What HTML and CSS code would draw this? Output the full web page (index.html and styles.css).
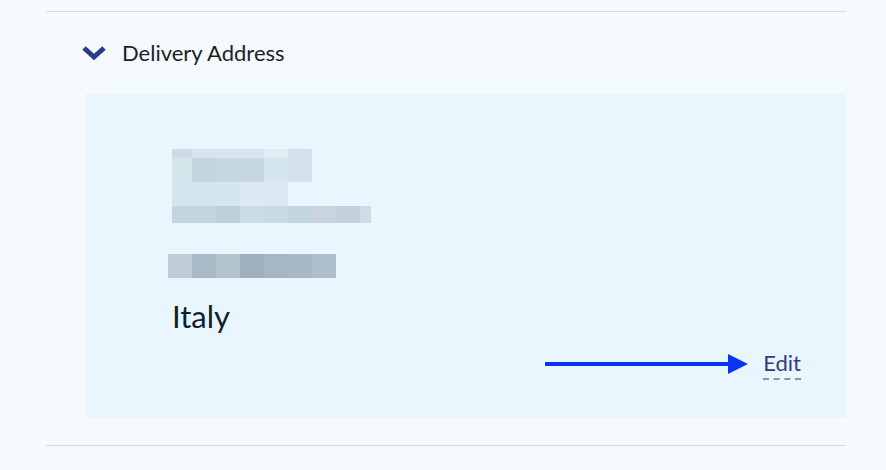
FILE: index.html
```html
<!DOCTYPE html>
<html>
<head>
<meta charset="utf-8">
<link rel="stylesheet" href="styles.css">
</head>
<body>
<div class="section">
  <div class="header">
    <svg class="chev" width="24" height="16" viewBox="0 0 24 16"><path d="M2 3 L12 12 L22 3" fill="none" stroke="#2b3a8c" stroke-width="5" stroke-linejoin="miter"/></svg>
    <span class="title">Delivery Address</span>
  </div>
  <div class="box">
    <div class="mosaic m1">
      <div class="row r1">
        <i style="width:20px;background:#cddde5"></i><i style="width:24px;background:#d6e6ee"></i><i style="width:24px;background:#d6e6ee"></i><i style="width:24px;background:#d6e6ee"></i><i style="width:24px;background:#dfeef5"></i><i style="width:24px;background:#d2e1ea"></i>
      </div>
      <div class="row r2">
        <i style="width:20px;background:#d5e5ec"></i><i style="width:24px;background:#c3d5de"></i><i style="width:24px;background:#c8d8e1"></i><i style="width:24px;background:#c8d8e1"></i><i style="width:24px;background:#d6e6ee"></i><i style="width:24px;background:#d2e1ea"></i>
      </div>
      <div class="row r3">
        <i style="width:68px;background:#d5e6ee"></i><i style="width:48px;background:#dde9f2"></i>
      </div>
      <div class="row r4">
        <i style="width:44px;background:#c3d5df"></i><i style="width:24px;background:#bfcfd9"></i><i style="width:24px;background:#cbdce5"></i><i style="width:24px;background:#c9dae3"></i><i style="width:24px;background:#c2d4de"></i><i style="width:24px;background:#c8d5df"></i><i style="width:24px;background:#c3d1dc"></i><i style="width:11px;background:#cfdde7"></i>
      </div>
    </div>
    <div class="mosaic m2">
      <div class="row r5">
        <i style="width:24px;background:#bfcdd6"></i><i style="width:24px;background:#a9b9c5"></i><i style="width:24px;background:#b3c4cd"></i><i style="width:24px;background:#9fb0bc"></i><i style="width:24px;background:#a6b7c3"></i><i style="width:24px;background:#a9b8c5"></i><i style="width:24px;background:#adbfca"></i>
      </div>
    </div>
    <div class="country">Italy</div>
    <div class="actions">
      <svg class="arrow" width="203" height="22" viewBox="0 0 203 22"><line x1="0" y1="11" x2="186" y2="11" stroke="#0a34f5" stroke-width="4"/><path d="M183 1 L203 11 L183 21 Z" fill="#0a34f5"/></svg>
      <a class="edit">Edit</a>
    </div>
  </div>
  <div class="spacer"></div>
</div>
</body>
</html>
```
FILE: styles.css
```css
html, body {
  margin: 0;
  padding: 0;
  background: #f5fafe;
  font-family: Lato, "Open Sans", sans-serif;
}
.section {
  margin: 11px 40px 0 46px;
  border-top: 1px solid #d6dde3;
  border-bottom: 1px solid #d3dbe1;
}
.header {
  height: 81px;
  display: flex;
  align-items: center;
  padding-left: 36px;
}
.chev {
  display: block;
  margin-right: 16px;
  margin-top: 1px;
}
.title {
  font-size: 22px;
  color: #1a1f2b;
  line-height: 27px;
}
.box {
  margin-left: 40px;
  height: 325px;
  box-sizing: border-box;
  background: #eaf6fd;
  padding: 56px 45px 0 82px;
  display: flex;
  flex-direction: column;
}
.mosaic .row {
  display: flex;
}
.mosaic i {
  display: block;
}
.m1 { margin-left: 4px; }
.r1 { height: 9px; }
.r2 { height: 24px; }
.r3 { height: 24px; }
.r4 { height: 17px; }
.m2 { margin-top: 31px; }
.r5 { height: 24px; }
.country {
  margin-top: 22px;
  margin-left: 4px;
  font-size: 31px;
  color: #0f1d36;
  line-height: 32px;
}
.actions {
  margin-top: 20px;
  display: flex;
  justify-content: flex-end;
  align-items: flex-start;
}
.arrow {
  display: block;
  margin-right: 15px;
  margin-top: 1px;
}
.edit {
  font-size: 22px;
  color: #2e3b8a;
  line-height: 22px;
  padding-bottom: 4px;
  border-bottom: 2px dashed #8a92b8;
}
.spacer {
  height: 27px;
}
```
